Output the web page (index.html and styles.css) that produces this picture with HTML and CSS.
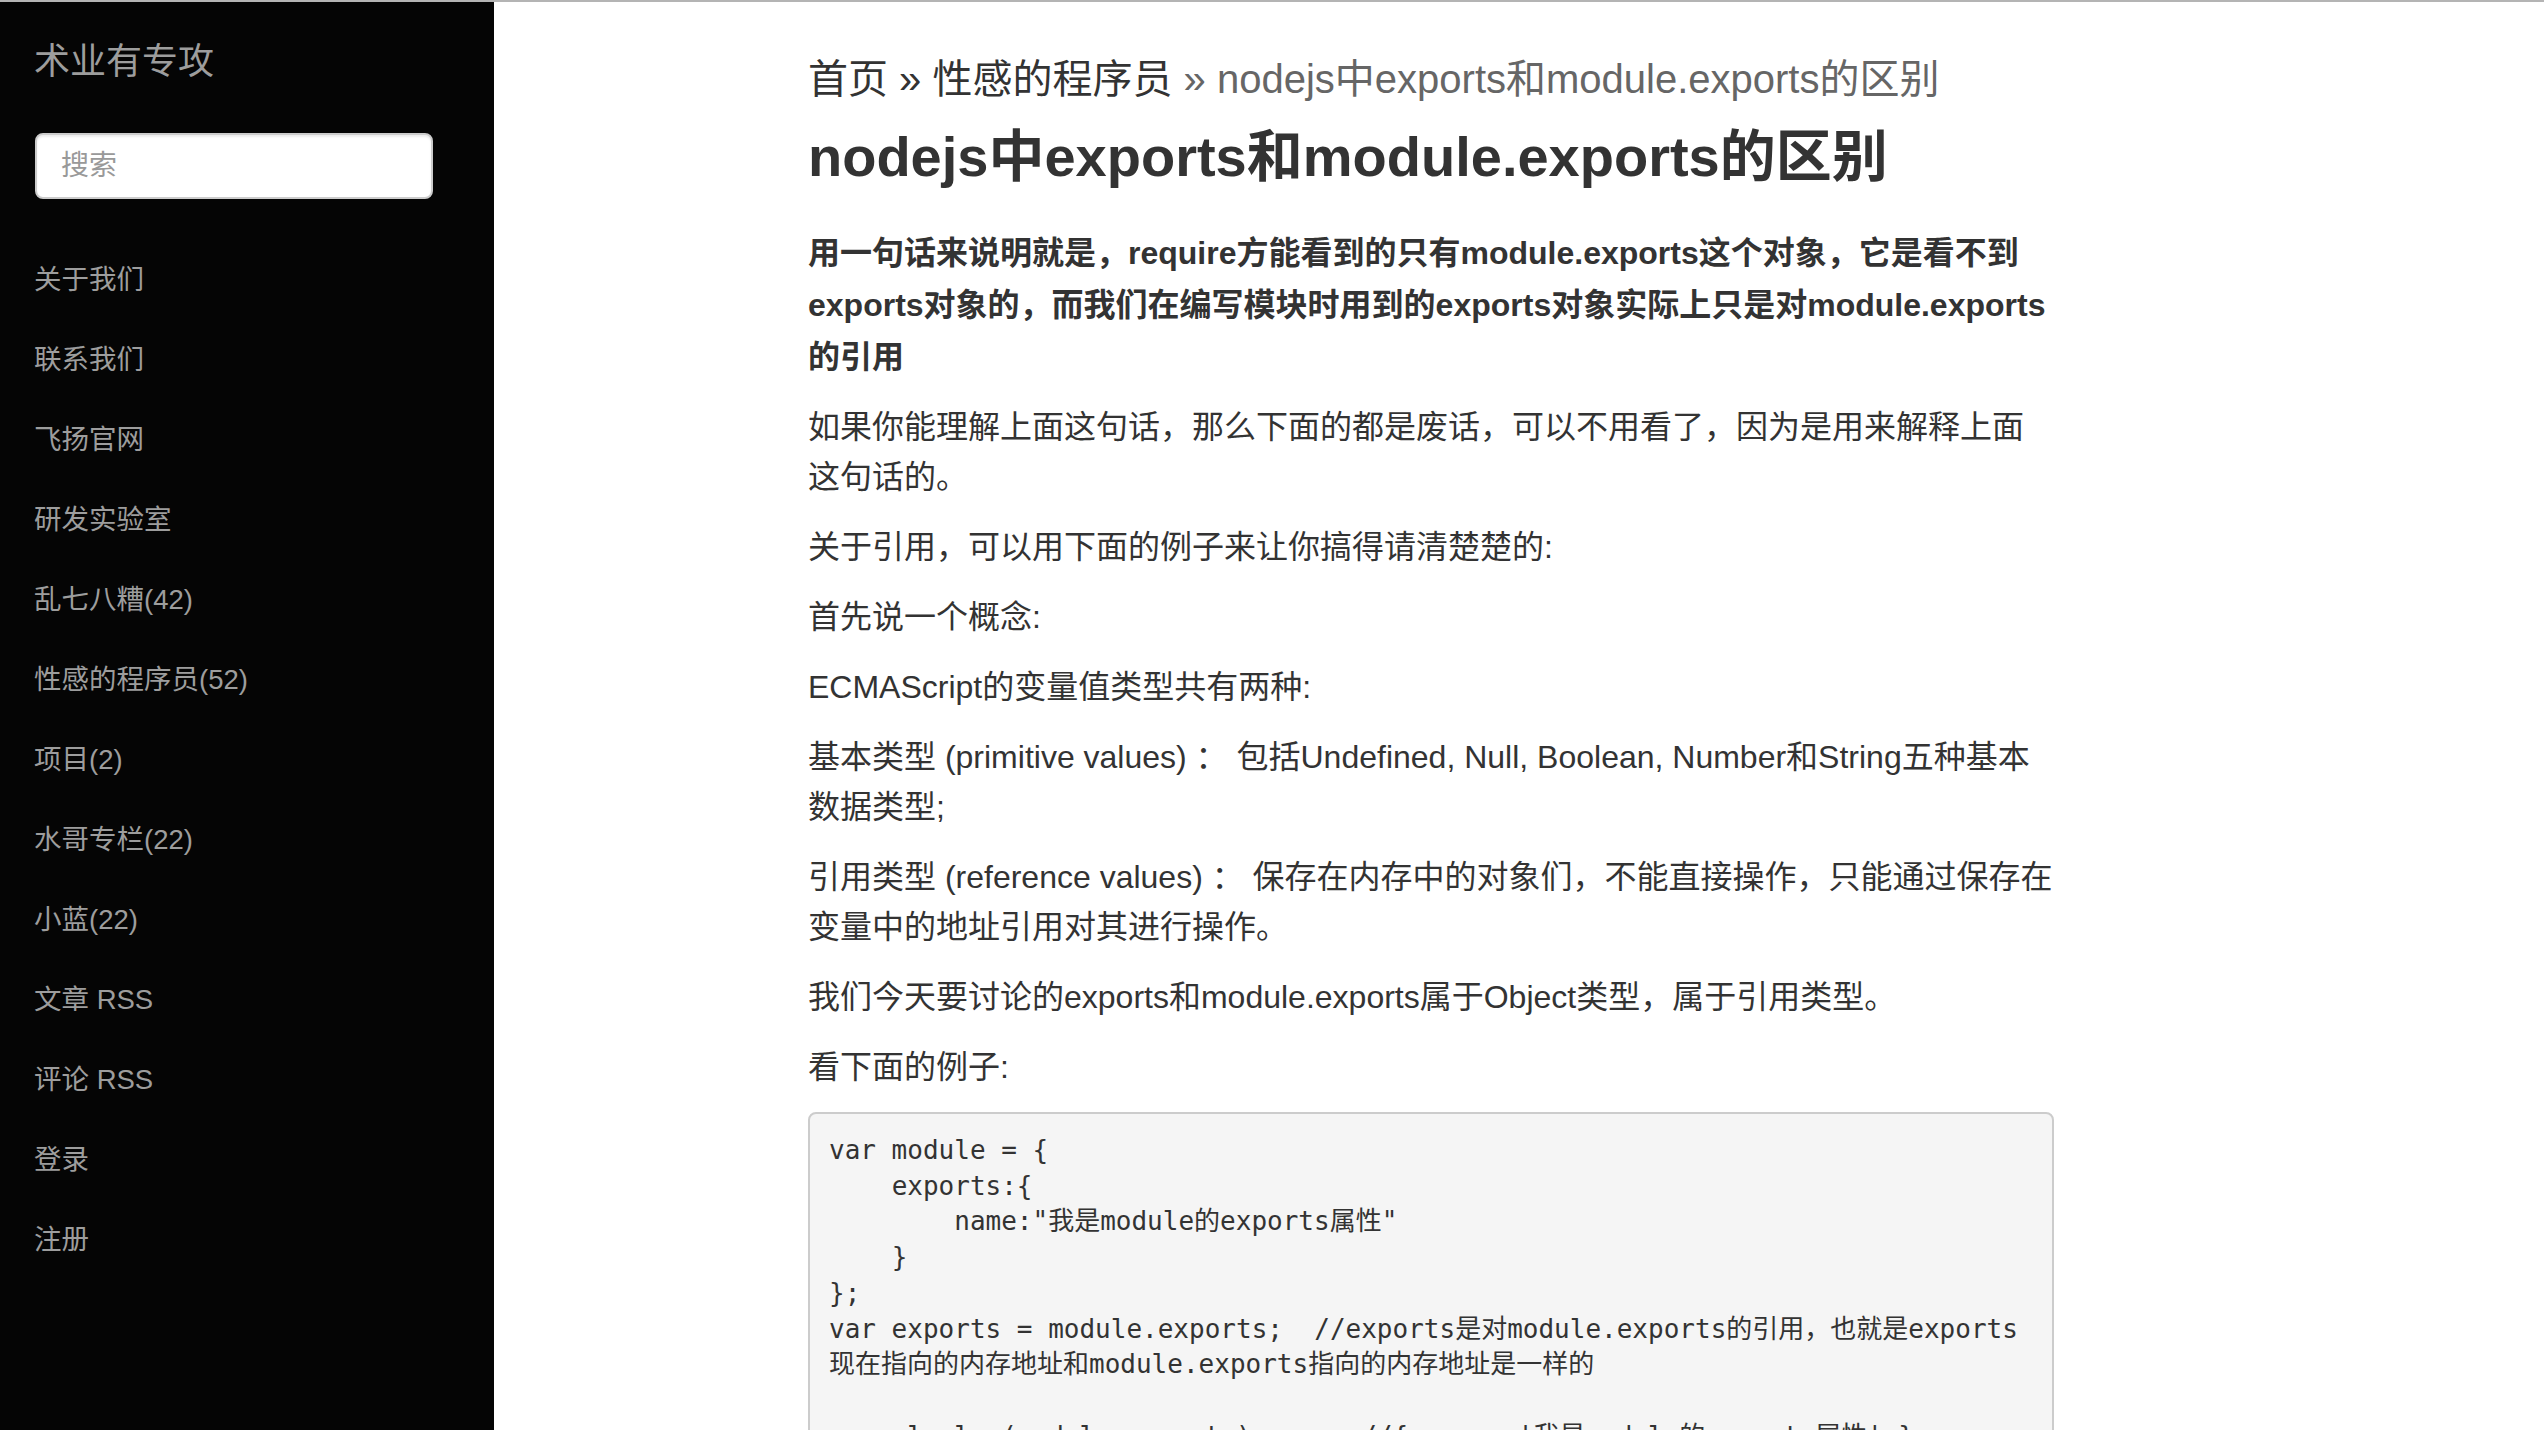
FILE: index.html
```html
<!DOCTYPE html>
<html lang="zh-CN">
<head>
<meta charset="utf-8">
<title>nodejs中exports和module.exports的区别 - 术业有专攻</title>
<link rel="stylesheet" href="styles.css">
</head>
<body>
<div class="page">
  <aside class="sidebar">
    <div class="brand">术业有专攻</div>
    <form class="search">
      <input class="search-input" type="text" placeholder="搜索">
    </form>
    <nav class="nav">
      <a class="nav-link" href="#">关于我们</a>
      <a class="nav-link" href="#">联系我们</a>
      <a class="nav-link" href="#">飞扬官网</a>
      <a class="nav-link" href="#">研发实验室</a>
      <a class="nav-link" href="#">乱七八糟(42)</a>
      <a class="nav-link" href="#">性感的程序员(52)</a>
      <a class="nav-link" href="#">项目(2)</a>
      <a class="nav-link" href="#">水哥专栏(22)</a>
      <a class="nav-link" href="#">小蓝(22)</a>
      <a class="nav-link" href="#">文章 RSS</a>
      <a class="nav-link" href="#">评论 RSS</a>
      <a class="nav-link" href="#">登录</a>
      <a class="nav-link" href="#">注册</a>
    </nav>
  </aside>
  <main class="main">
    <article class="post">
      <div class="crumbs"><a href="#">首页</a> » <a href="#">性感的程序员</a> <span class="crumb-current">» nodejs中exports和module.exports的区别</span></div>
      <h1 class="post-title">nodejs中exports和module.exports的区别</h1>
      <p class="lead"><strong>用一句话来说明就是，require方能看到的只有module.exports这个对象，它是看不到exports对象的，而我们在编写模块时用到的exports对象实际上只是对module.exports的引用</strong></p>
      <p>如果你能理解上面这句话，那么下面的都是废话，可以不用看了，因为是用来解释上面这句话的。</p>
      <p>关于引用，可以用下面的例子来让你搞得请清楚楚的:</p>
      <p>首先说一个概念:</p>
      <p>ECMAScript的变量值类型共有两种:</p>
      <p>基本类型 (primitive values) ： 包括Undefined, Null, Boolean, Number和String五种基本数据类型;</p>
      <p>引用类型 (reference values) ： 保存在内存中的对象们，不能直接操作，只能通过保存在变量中的地址引用对其进行操作。</p>
      <p>我们今天要讨论的exports和module.exports属于Object类型，属于引用类型。</p>
      <p>看下面的例子:</p>
<pre class="code">var module = {
    exports:{
        name:"我是module的exports属性"
    }
};
var exports = module.exports;  //exports是对module.exports的引用，也就是exports现在指向的内存地址和module.exports指向的内存地址是一样的

console.log(module.exports);      //{ name: '我是module的exports属性' }
console.log(exports);             //{ name: '我是module的exports属性' }

exports.name = "我想改一下名字";
</pre>
    </article>
  </main>
</div>
</body>
</html>
```
FILE: styles.css
```css
html, body {
  margin: 0;
  padding: 0;
  height: 100%;
}

body {
  border-top: 2px solid #b4b4b4;
  box-sizing: border-box;
  background: #fff;
  color: #333;
  font-family: "Liberation Sans", "Noto Sans CJK SC", sans-serif;
  overflow: hidden;
}

.page {
  display: flex;
  min-height: 100%;
  align-items: stretch;
}

.sidebar {
  width: 494px;
  flex: 0 0 494px;
  background: #050505;
  padding: 35px 35px 0 34px;
  box-sizing: border-box;
  min-height: 1428px;
  display: flex;
  flex-direction: column;
}

.brand {
  font-size: 36px;
  line-height: 50px;
  color: #9d9d9d;
}

.search {
  margin: 46px 0 0 1px;
}

.search-input {
  display: block;
  width: 398px;
  height: 66px;
  box-sizing: border-box;
  border: 2px solid #cccccc;
  border-radius: 8px;
  background: #fff;
  padding: 0 24px;
  font-family: "Liberation Sans", "Noto Sans CJK SC", sans-serif;
  font-size: 28px;
  color: #555;
  box-shadow: inset 0 2px 2px rgba(0, 0, 0, 0.075);
  outline: none;
}

.search-input::placeholder {
  color: #999;
}

.nav {
  display: flex;
  flex-direction: column;
  margin-top: 41px;
}

.nav-link {
  display: block;
  font-size: 27.5px;
  line-height: 80px;
  height: 80px;
  color: #9d9d9d;
  text-decoration: none;
}

.main {
  flex: 1 1 auto;
  padding: 49px 0 0 314px;
  box-sizing: border-box;
}

.post {
  width: 1246px;
}

.crumbs {
  font-size: 40px;
  line-height: 56px;
  color: #333;
}

.crumbs a {
  color: #333;
  text-decoration: none;
}

.crumb-current {
  color: #666;
}

.post-title {
  margin: 18px 0 38px 0;
  font-size: 56px;
  line-height: 64px;
  font-weight: bold;
  color: #333;
}

.post p {
  margin: 0 0 20px 0;
  font-size: 32px;
  line-height: 50px;
}

.post p.lead {
  line-height: 52px;
  margin-bottom: 19px;
}

.post strong {
  font-weight: bold;
}

.code {
  margin: 0;
  padding: 19px;
  background: #f5f5f5;
  border: 2px solid #cccccc;
  border-radius: 8px;
  color: #333;
  font-family: "DejaVu Sans Mono", "Noto Sans CJK SC", monospace;
  font-size: 26px;
  line-height: 35.7px;
  white-space: pre-wrap;
  word-wrap: break-word;
  word-break: break-all;
}
```
